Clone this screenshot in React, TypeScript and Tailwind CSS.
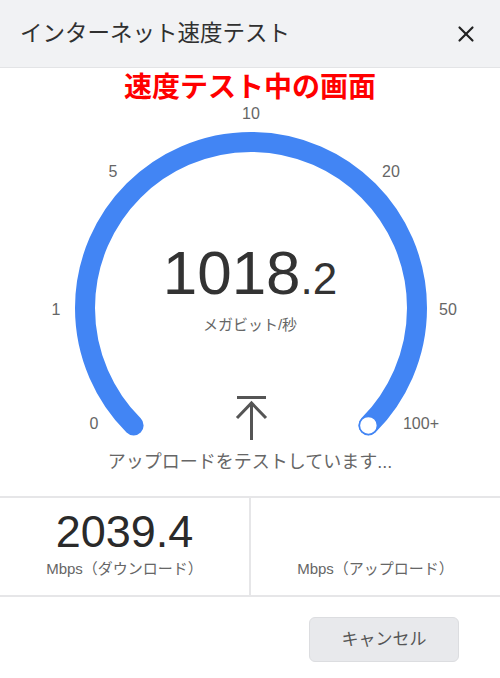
import { X } from "lucide-react";

const font = { fontFamily: '"Liberation Sans", "Noto Sans CJK JP", sans-serif' };

// gauge geometry: center (251,308), r 166, 270deg sweep
const cx = 251;
const cy = 308;
const r = 166;
const pt = (deg: number) => {
  const a = (deg * Math.PI) / 180;
  return [cx + r * Math.cos(a), cy + r * Math.sin(a)];
};
const [sx, sy] = pt(135);
const [ex, ey] = pt(45);
const arc = `M ${sx} ${sy} A ${r} ${r} 0 1 1 ${ex} ${ey}`;

const ticks = [
  { t: "0", x: 94, y: 429 },
  { t: "1", x: 56, y: 315 },
  { t: "5", x: 113, y: 177 },
  { t: "10", x: 251, y: 119 },
  { t: "20", x: 391, y: 177 },
  { t: "50", x: 448, y: 315 },
  { t: "100+", x: 421, y: 429 },
];

export default function App() {
  return (
    <div className="w-[500px] h-[678px] bg-white relative overflow-hidden" style={font}>
      <div className="h-[68px] bg-[#f1f2f4] border-b border-[#e3e4e6] flex items-center justify-between pl-5 pr-[21px]">
        <span className="text-[22.5px] text-[#303030]">インターネット速度テスト</span>
        <X className="h-[26px] w-[26px] text-[#222]" strokeWidth={2} />
      </div>

      <div className="relative h-[428px]">
        <svg width="500" height="428" viewBox="0 68 500 428" className="absolute left-0 top-0">
          <path d={arc} fill="none" stroke="#4285f4" strokeWidth="20" strokeLinecap="round" />
          <circle cx={ex} cy={ey} r="9" fill="#fff" stroke="#4285f4" strokeWidth="1.5" />
          {ticks.map((k) => (
            <text key={k.t} x={k.x} y={k.y} textAnchor="middle" fontSize="16" fill="#666" style={font}>
              {k.t}
            </text>
          ))}
          {/* upload arrow */}
          <g stroke="#555" strokeWidth="3" fill="none">
            <line x1="237" y1="397.5" x2="266" y2="397.5" />
            <line x1="251.5" y1="403" x2="251.5" y2="440" />
            <polyline points="237,418 251.5,403 266,418" />
          </g>
        </svg>

        <div className="relative flex flex-col items-center">
          <div className="mt-[2px] text-[28px] font-bold text-[#ff0000] leading-[36px]">速度テスト中の画面</div>
          <div className="mt-[136px] flex items-baseline text-[#333] leading-none">
            <span className="text-[62px]">1018</span>
            <span className="text-[44px]">.2</span>
          </div>
          <div className="mt-[10px] text-[15px] text-[#666]">メガビット/秒</div>
          <div className="mt-[112px] text-[18px] text-[#666]">アップロードをテストしています...</div>
        </div>
      </div>

      <div className="h-[101px] border-t-2 border-b-2 border-[#e6e6e8] flex">
        <div className="flex-1 flex flex-col items-center justify-end pb-[15px] border-r-2 border-[#e6e6e8]">
          <span className="text-[45px] leading-none text-[#2a2a2a]">2039.4</span>
          <span className="mt-[4px] text-[15px] text-[#666]">Mbps（ダウンロード）</span>
        </div>
        <div className="flex-1 flex flex-col items-center justify-end pb-[15px]">
          <span className="text-[15px] text-[#666]">Mbps（アップロード）</span>
        </div>
      </div>

      <div className="flex justify-end pr-[41px] pt-[20px]">
        <button className="w-[150px] h-[45px] rounded-[6px] bg-[#e8e9ec] border border-[#dcdde0] text-[17px] text-[#555]">
          キャンセル
        </button>
      </div>
    </div>
  );
}
